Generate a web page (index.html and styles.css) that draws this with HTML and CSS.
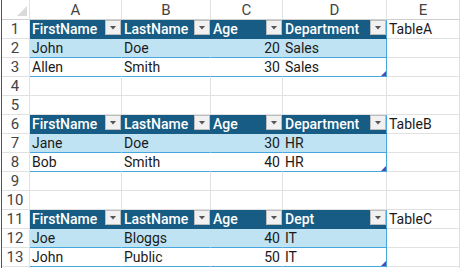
FILE: index.html
```html
<!DOCTYPE html>
<html>
<head>
<meta charset="utf-8">
<link rel="stylesheet" href="styles.css">
</head>
<body>
<div class="sheet">
  <div class="row head">
    <div class="corner"></div>
    <div class="colh">A</div>
    <div class="colh">B</div>
    <div class="colh">C</div>
    <div class="colh">D</div>
    <div class="colh">E</div>
  </div>

  <div class="row">
    <div class="rowh">1</div>
    <div class="cell th"><span>FirstName</span><span class="flt"></span></div>
    <div class="cell th"><span>LastName</span><span class="flt"></span></div>
    <div class="cell th"><span>Age</span><span class="flt"></span></div>
    <div class="cell th end"><span>Department</span><span class="flt"></span></div>
    <div class="cell">TableA</div>
  </div>
  <div class="row">
    <div class="rowh">2</div>
    <div class="cell band">John</div>
    <div class="cell band">Doe</div>
    <div class="cell band num">20</div>
    <div class="cell band end">Sales</div>
    <div class="cell"></div>
  </div>
  <div class="row">
    <div class="rowh">3</div>
    <div class="cell plain">Allen</div>
    <div class="cell plain">Smith</div>
    <div class="cell plain num">30</div>
    <div class="cell plain end grip">Sales</div>
    <div class="cell"></div>
  </div>
  <div class="row">
    <div class="rowh">4</div>
    <div class="cell"></div><div class="cell"></div><div class="cell"></div><div class="cell"></div><div class="cell"></div>
  </div>
  <div class="row">
    <div class="rowh">5</div>
    <div class="cell"></div><div class="cell"></div><div class="cell"></div><div class="cell"></div><div class="cell"></div>
  </div>

  <div class="row">
    <div class="rowh">6</div>
    <div class="cell th"><span>FirstName</span><span class="flt"></span></div>
    <div class="cell th"><span>LastName</span><span class="flt"></span></div>
    <div class="cell th"><span>Age</span><span class="flt"></span></div>
    <div class="cell th end"><span>Department</span><span class="flt"></span></div>
    <div class="cell">TableB</div>
  </div>
  <div class="row">
    <div class="rowh">7</div>
    <div class="cell band">Jane</div>
    <div class="cell band">Doe</div>
    <div class="cell band num">30</div>
    <div class="cell band end">HR</div>
    <div class="cell"></div>
  </div>
  <div class="row">
    <div class="rowh">8</div>
    <div class="cell plain">Bob</div>
    <div class="cell plain">Smith</div>
    <div class="cell plain num">40</div>
    <div class="cell plain end grip">HR</div>
    <div class="cell"></div>
  </div>
  <div class="row">
    <div class="rowh">9</div>
    <div class="cell"></div><div class="cell"></div><div class="cell"></div><div class="cell"></div><div class="cell"></div>
  </div>
  <div class="row">
    <div class="rowh">10</div>
    <div class="cell"></div><div class="cell"></div><div class="cell"></div><div class="cell"></div><div class="cell"></div>
  </div>

  <div class="row">
    <div class="rowh">11</div>
    <div class="cell th"><span>FirstName</span><span class="flt"></span></div>
    <div class="cell th"><span>LastName</span><span class="flt"></span></div>
    <div class="cell th"><span>Age</span><span class="flt"></span></div>
    <div class="cell th end"><span>Dept</span><span class="flt"></span></div>
    <div class="cell">TableC</div>
  </div>
  <div class="row">
    <div class="rowh">12</div>
    <div class="cell band">Joe</div>
    <div class="cell band">Bloggs</div>
    <div class="cell band num">40</div>
    <div class="cell band end">IT</div>
    <div class="cell"></div>
  </div>
  <div class="row">
    <div class="rowh">13</div>
    <div class="cell plain">John</div>
    <div class="cell plain">Public</div>
    <div class="cell plain num">50</div>
    <div class="cell plain end grip">IT</div>
    <div class="cell"></div>
  </div>
  <div class="row">
    <div class="rowh"></div>
    <div class="cell"></div><div class="cell"></div><div class="cell"></div><div class="cell"></div><div class="cell"></div>
  </div>
</div>
</body>
</html>
```

FILE: styles.css
```css
html, body {
  margin: 0;
  padding: 0;
  background: #ffffff;
}

body {
  width: 460px;
  height: 268px;
  overflow: hidden;
  font-family: Roboto, "Liberation Sans", Arial, sans-serif;
  font-size: 14px;
  color: #1a1a1a;
}

.sheet {
  margin-left: 1px;
  border-left: 1px solid #1e7145;
}

.row {
  display: grid;
  grid-template-columns: 28px 92px 89px 72px 104px 1fr;
  height: 19px;
}

.row.head {
  height: 20px;
}

.row > div {
  box-sizing: border-box;
  border-right: 1px solid #e1e1e1;
  border-bottom: 1px solid #e1e1e1;
  display: flex;
  align-items: center;
  white-space: nowrap;
  overflow: hidden;
  line-height: 18px;
}

.corner {
  position: relative;
  border-bottom-color: #cfcfcf !important;
}

.corner::after {
  content: "";
  position: absolute;
  right: 2px;
  bottom: 3px;
  width: 10px;
  height: 10px;
  background: #dadada;
  clip-path: polygon(100% 0, 100% 100%, 0 100%);
}

.colh {
  justify-content: center;
  color: #444444;
  font-size: 15px;
  border-bottom-color: #cfcfcf !important;
}

.rowh {
  justify-content: center;
  color: #444444;
  font-size: 15px;
  padding-right: 1px;
}

.cell {
  padding: 0 2px;
}

.num {
  justify-content: flex-end;
}

.th {
  background: #175c84;
  color: #ffffff;
  font-weight: 500;
  font-size: 14px;
  border-right-color: #175c84 !important;
  border-bottom-color: #175c84 !important;
  justify-content: space-between;
  align-items: flex-start !important;
  padding-right: 0;
}

.th span:first-child {
  line-height: 18px;
}

.flt {
  flex: none;
  box-sizing: border-box;
  width: 16px;
  height: 15px;
  background: #f1f1f1;
  border: 1px solid #bdbdbd;
  display: flex;
  align-items: center;
  justify-content: center;
}

.flt::after {
  content: "";
  width: 7px;
  height: 4px;
  background: #555555;
  clip-path: polygon(0 0, 100% 0, 50% 100%);
}

.band {
  background: #bfe3f3;
  border-right-color: #bfe3f3 !important;
  border-bottom-color: #46a7df !important;
}

.plain {
  background: #ffffff;
  border-right-color: #ffffff !important;
  border-bottom-color: #46a7df !important;
}

.row > .end {
  border-right-color: #46a7df !important;
}

.grip {
  position: relative;
}

.grip::after {
  content: "";
  position: absolute;
  right: 0;
  bottom: 0;
  width: 5px;
  height: 5px;
  background: #4a4db3;
  clip-path: polygon(100% 0, 100% 100%, 0 100%);
}
```
